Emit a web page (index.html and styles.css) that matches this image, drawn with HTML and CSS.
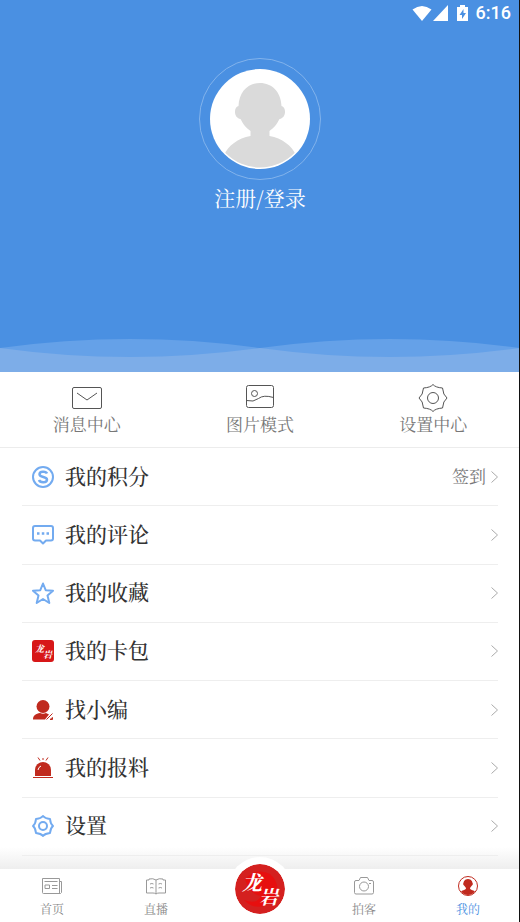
FILE: index.html
```
<!DOCTYPE html>
<html lang="zh-CN">
<head>
    <meta charset="UTF-8">
    <meta name="viewport" content="width=device-width, initial-scale=1.0">
    <title>我的</title>
    <link rel="stylesheet" href="styles.css">
</head>
<body>
    <!-- Profile header -->
    <header class="hero">
        <div class="status-bar">
            <svg width="20" height="16" viewBox="0 0 20 16"><path fill="#fff" d="M10 16 .5 4.500Q10-2.500 19.500 4.500z"/></svg>
            <svg width="15" height="16" viewBox="0 0 15 16"><path fill="#fff" d="M15 0v16H0z"/></svg>
            <svg class="battery" width="11" height="16" viewBox="0 0 11 16"><path fill="#fff" d="M3 0h5v2h3v14H0V2h3z"/><path fill="#4a90e2" d="M6.500 4l-4 6H5v4l4-6H6.500z"/></svg>
            <span>6:16</span>
        </div>
        <a href="#" class="login">
            <span class="avatar-ring">
                <svg class="avatar" viewBox="0 0 100 100">
                    <defs><clipPath id="face"><circle cx="50" cy="50" r="48.500"/></clipPath></defs>
                    <circle cx="50" cy="50" r="50" fill="#fff"/>
                    <path clip-path="url(#face)" fill="#dadada" d="M50 14c-12 0-21 9-21.500 23-5 1-5 12 2 13 3 6 6 9 10 12v5C28 69 18 77 14 86v14h72V86c-4-9-14-17-26.500-19v-5c4-3 7-6 10-12 7-1 7-12 2-13C71 23 62 14 50 14z"/>
                </svg>
            </span>
            <span class="login-text">注册/登录</span>
        </a>
        <svg class="wave" viewBox="0 0 520 33" preserveAspectRatio="none">
            <path fill="#65a1e8" d="M0 9Q130-9 260 9Q390-9 520 9V33H0z"/>
            <path fill="#7dade8" d="M0 9Q130 27 260 9Q390 27 520 9V33H0z"/>
        </svg>
    </header>

    <!-- Shortcuts -->
    <section class="shortcuts">
        <a href="#">
            <svg width="30" height="28" viewBox="0 0 30 28"><rect x=".5" y="3.500" width="29" height="21" rx="1.500"/><path d="M5 9l10 7 10-7"/></svg>
            <span>消息中心</span>
        </a>
        <a href="#">
            <svg width="28" height="28" viewBox="0 0 28 28"><rect x=".5" y="1.500" width="27" height="22" rx="2"/><circle cx="8.500" cy="9.500" r="3"/><path d="M.5 16.500q7 2 12-2t15-1"/></svg>
            <span>图片模式</span>
        </a>
        <a href="#">
            <svg width="30" height="28" viewBox="0 0 30 28"><path d="M15 .5Q17.500 3.500 24.500 4Q25 11 29 14Q25 17 24.500 24Q17.500 24.500 15 27.500Q12.500 24.500 5.500 24Q5 17 1 14Q5 11 5.500 4Q12.500 3.500 15 .5z"/><circle cx="15" cy="14" r="5.500"/></svg>
            <span>设置中心</span>
        </a>
    </section>

    <!-- Menu list -->
    <main class="menu">
        <a href="#">
            <svg class="icon blue" viewBox="0 0 22 22"><circle cx="11" cy="11" r="10"/><path stroke-width="2.500" d="M15 7.500C14 5 7.500 5 7.500 8.200C7.500 12 15 10 15 13.700C15 17 8 17 7 14"/></svg>
            <span class="label">我的积分</span>
            <span class="extra">签到</span>
            <svg class="arrow" viewBox="0 0 7 12"><path d="M.5.5l6 5.500-6 5.500"/></svg>
        </a>
        <a href="#">
            <svg class="icon blue" viewBox="0 0 22 22"><path d="M3 2h16a2 2 0 0 1 2 2v10.500a2 2 0 0 1-2 2h-5L11 19.500 8 16.500H3a2 2 0 0 1-2-2V4a2 2 0 0 1 2-2z"/><path stroke-width="2.500" d="M5 9.500h2.500M9.800 9.500h2.500M14.500 9.500H17"/></svg>
            <span class="label">我的评论</span>
            <svg class="arrow" viewBox="0 0 7 12"><path d="M.5.5l6 5.500-6 5.500"/></svg>
        </a>
        <a href="#">
            <svg class="icon blue" viewBox="0 0 22 22"><path d="M11 1.500l2.700 6.700 7.300.5-5.500 4.800L17.300 21 11 17l-6.300 4 1.800-7.500L1 8.700l7.300-.5z"/></svg>
            <span class="label">我的收藏</span>
            <svg class="arrow" viewBox="0 0 7 12"><path d="M.5.5l6 5.500-6 5.500"/></svg>
        </a>
        <a href="#">
            <svg class="icon logo" viewBox="0 0 22 22"><rect width="22" height="22" rx="3" fill="#d71718"/><text x="3" y="12" font-size="9">龙</text><text x="11" y="18" font-size="9">岩</text></svg>
            <span class="label">我的卡包</span>
            <svg class="arrow" viewBox="0 0 7 12"><path d="M.5.5l6 5.500-6 5.500"/></svg>
        </a>
        <a href="#">
            <svg class="icon red" viewBox="0 0 22 22"><circle cx="11" cy="7.500" r="6.500"/><path d="M1 20.500c0-4 3-6 7-6.500q3 1.500 6 0l3 1.500-4 5z"/><path class="line" d="M14.500 20.500l6-6M18 20.500h2.500v-2z"/></svg>
            <span class="label">找小编</span>
            <svg class="arrow" viewBox="0 0 7 12"><path d="M.5.5l6 5.500-6 5.500"/></svg>
        </a>
        <a href="#">
            <svg class="icon red" viewBox="0 0 22 22"><path d="M3 19v-6a8 8 0 0 1 16 0v6z"/><path class="line" d="M1 20.500h20M6 .5l2 3M11 1v2M16 .5l-2 3"/><path class="shine" d="M6 13q.5-3 3-4"/></svg>
            <span class="label">我的报料</span>
            <svg class="arrow" viewBox="0 0 7 12"><path d="M.5.5l6 5.500-6 5.500"/></svg>
        </a>
        <a href="#">
            <svg class="icon blue" viewBox="0 0 22 22"><path d="M11 1Q13 3.500 18 4Q18.500 9 21 11Q18.500 13 18 18Q13 18.500 11 21Q9 18.500 4 18Q3.500 13 1 11Q3.500 9 4 4Q9 3.500 11 1z"/><circle cx="11" cy="11" r="4"/></svg>
            <span class="label">设置</span>
            <svg class="arrow" viewBox="0 0 7 12"><path d="M.5.5l6 5.500-6 5.500"/></svg>
        </a>
    </main>

    <!-- Bottom navigation -->
    <nav class="tab-bar">
        <a href="#">
            <svg width="20" height="20" viewBox="0 0 20 20"><path d="M.5 2.500h17v15H1.500a1 1 0 0 1-1-1zM17.500 5.500h2v11l-1 1h-2M2.500 5.500h13M10 9.500h5.500M10 12.500h5.500M3 9h4.500v3.500H3z"/></svg>
            <span>首页</span>
        </a>
        <a href="#">
            <svg width="20" height="20" viewBox="0 0 20 20"><path d="M10 4Q7 2 3 3v1H.5v13H7q2 0 3 1 1-1 3-1h6.500V4H17V3q-4-1-7 1zM10 4v14M4 8q2-1 3.500 0M4 12q2-1 3.500 0M12.500 8q2-1 3.500 0M12.500 12q2-1 3.500 0"/></svg>
            <span>直播</span>
        </a>
        <a href="#" class="home" aria-label="龙岩">
            <svg class="logo" viewBox="0 0 50 50"><circle cx="25" cy="25" r="25" fill="#d4201f"/><path fill="#ef0808" d="M10 15q12-12 25-5 13 12 4 27-18 12-30-1 13 5 17-4-12-2-16-17z" opacity=".7"/><text x="7" y="26" font-size="20">龙</text><text x="24" y="40" font-size="19">岩</text></svg>
        </a>
        <a href="#">
            <svg width="20" height="20" viewBox="0 0 20 20"><path d="M2 4.500h3l1.500-3h7l1.500 3h3a1.500 1.500 0 0 1 1.500 1.500v10.500a1.500 1.500 0 0 1-1.500 1.500H2A1.500 1.500 0 0 1 .5 16.500V6A1.500 1.500 0 0 1 2 4.500zM15 7.500h2"/><circle cx="10" cy="10.500" r="4.500"/></svg>
            <span>拍客</span>
        </a>
        <a href="#" class="active">
            <svg width="20" height="20" viewBox="0 0 20 20"><circle cx="10" cy="10" r="9.500"/><path class="solid" d="M10 3C6.500 3 5.500 6 5.500 7c-1 1 0 2 1 3l1.500 2c0 2-3 2-5 3.500Q6 19 10 19t7-3.500c-2-1.500-5-1.500-5-3.500l1.500-2c1-1 2-2 1-3C14.500 6 13.500 3 10 3z"/></svg>
            <span>我的</span>
        </a>
    </nav>
</body>
</html>
```
FILE: styles.css
```
/* General styles */
* {
    box-sizing: border-box;
}
body {
    font-family: "Noto Serif CJK SC", "Noto Sans CJK SC", serif;
    margin: 0;
    min-height: 100vh;
    display: flex;
    flex-direction: column;
    background-color: #ffffff;
}
/* dark line down the right edge */
body::after {
    content: "";
    position: fixed;
    top: 0;
    right: 0;
    bottom: 0;
    width: 1px;
    background-color: #111111;
}
a {
    color: inherit;
    text-decoration: none;
}
svg {
    display: block;
    flex-shrink: 0;
}

/* Header */
.hero {
    height: 372px;
    display: flex;
    flex-direction: column;
    background-color: #4a90e2;
    color: #ffffff;
}
.status-bar {
    display: flex;
    justify-content: flex-end;
    align-items: center;
    height: 26px;
    padding-right: 9px;
    font: 500 18px/26px Roboto, sans-serif;
}
.status-bar svg {
    margin-right: 1px;
}
.status-bar .battery {
    margin: 0 8px;
}
.login {
    align-self: center;
    display: flex;
    flex-direction: column;
    align-items: center;
    margin-top: 32px;
}
.avatar-ring {
    padding: 10px;
    border: 1px solid #82b3ec;
    border-radius: 50%;
}
.avatar {
    width: 100px;
    height: 100px;
}
.login-text {
    margin-top: 2px;
    font-size: 21px;
    line-height: 30px;
}
.wave {
    width: 100%;
    height: 33px;
    margin-top: auto;
}

/* Shortcuts */
.shortcuts {
    display: flex;
    height: 76px;
    padding-top: 12px;
    border-bottom: 1px solid #ececec;
    color: #777777;
    font-size: 17px;
    line-height: 24px;
}
.shortcuts a {
    flex: 1;
    display: flex;
    flex-direction: column;
    align-items: center;
}
.shortcuts svg {
    fill: none;
    stroke: #555555;
}

/* Menu list */
.menu {
    flex: 1;
    display: flex;
    flex-direction: column;
    padding: 0 22px 13px;
    background: linear-gradient(to top, #eeeeee, #ffffff 22px);
}
.menu a {
    flex: 1;
    min-height: 56px;
    display: flex;
    align-items: center;
    padding-left: 10px;
    border-bottom: 1px solid #eeeeee;
}
.label {
    flex: 1;
    margin-left: 11px;
    padding-bottom: 4px;
    font-size: 21px;
    font-weight: 500;
    line-height: 30px;
    color: #333333;
}
.extra {
    margin-right: 5px;
    padding-bottom: 2px;
    font-size: 17px;
    color: #777777;
}
.icon {
    width: 22px;
    height: 22px;
}
.icon.blue {
    fill: none;
    stroke: #73abf0;
    stroke-width: 2;
    stroke-linejoin: round;
}
.icon.red {
    fill: #c02a1e;
}
.icon .line {
    fill: none;
    stroke: #c02a1e;
}
.icon .shine {
    fill: none;
    stroke: #ffffff;
}
.arrow {
    width: 7px;
    height: 12px;
    fill: none;
    stroke: #aaaaaa;
}
.logo text {
    fill: #ffffff;
    font-weight: 700;
    font-style: italic;
}

/* Bottom navigation */
.tab-bar {
    display: flex;
    height: 53px;
    background-color: #ffffff;
    color: #888888;
    font-size: 12px;
    line-height: 18px;
}
.tab-bar a {
    flex: 1;
    display: flex;
    flex-direction: column;
    align-items: center;
    padding-top: 7px;
    gap: 4px;
}
.tab-bar svg {
    fill: none;
    stroke: #999999;
}
.tab-bar .active {
    color: #4a90e2;
}
.tab-bar .active svg {
    stroke: #c02a1e;
}
.tab-bar .solid {
    fill: #c02a1e;
    stroke: none;
}
.tab-bar .home {
    padding-top: 0;
}
.tab-bar .home svg {
    width: 64px;
    height: 64px;
    margin-top: -12px;
    padding: 7px;
    border-radius: 50%;
    background-color: #ffffff;
    stroke: none;
}
```
